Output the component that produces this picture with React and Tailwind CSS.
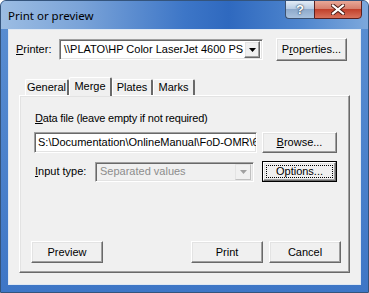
import React from 'react';

const ui = { fontFamily: '"Liberation Sans", Arial, sans-serif' };

// classic 3D edges
const raised =
  'bg-[#f0f0f0] border border-t-white border-l-white border-r-[#696969] border-b-[#696969] shadow-[inset_-1px_-1px_0_#a0a0a0,inset_1px_1px_0_#e3e3e3]';
const sunken =
  'border border-t-[#a0a0a0] border-l-[#a0a0a0] border-r-white border-b-white shadow-[inset_1px_1px_0_#696969,inset_-1px_-1px_0_#e3e3e3]';

function Arrow({ color = '#000' }) {
  return (
    <svg width="7" height="4" viewBox="0 0 7 4">
      <path d="M0 0h7L3.5 4z" fill={color} />
    </svg>
  );
}

function Button({ children, className = '' }) {
  return (
    <div className={`${raised} flex items-center justify-center text-[11px] text-black ${className}`}>
      {children}
    </div>
  );
}

function Tab({ label, active }) {
  return (
    <div
      className={`flex items-center justify-center text-[11px] text-black bg-[#f0f0f0] rounded-t-[2px] border-t border-l border-t-white border-l-white border-r-[2px] border-r-[#696969] ${
        active ? 'h-[19px] -mb-px pb-[2px]' : 'h-[16px]'
      }`}
      style={{ width: label.w }}
    >
      {label.name}
    </div>
  );
}

const tabs = [
  { name: 'General', w: 44 },
  { name: 'Merge', w: 43 },
  { name: 'Plates', w: 41 },
  { name: 'Marks', w: 42 },
];

export default function App() {
  return (
    <div
      className="w-[369px] h-[293px] flex flex-col rounded-t-[6px] border border-[#34547c] bg-[linear-gradient(180deg,#5b8fd2,#3e76c6)] overflow-hidden"
      style={ui}
    >
      {/* Title bar */}
      <div className="h-[28px] flex items-start bg-[linear-gradient(90deg,#9cbde3_0%,#7aa3d8_22%,#3d76c7_50%,#2f69bf_62%,#4f86ce_82%,#7da8dc_100%)] shrink-0">
        <div
          className="pl-[7px] pt-[6px] text-[11.5px] text-black"
          style={{ fontFamily: '"Noto Sans", "Open Sans", sans-serif' }}
        >
          Print or preview
        </div>
        <div className="ml-auto mr-[6px] flex h-[19px] -mt-px">
          <div className="w-[29px] h-full rounded-bl-[4px] border border-[#3c5170] border-r-0 bg-[linear-gradient(180deg,#e3ecf6_0%,#b9cde4_45%,#8eaacb_50%,#a9c2de_100%)] flex items-center justify-center">
            <span
              className="text-white font-bold text-[13px] leading-none"
              style={{ textShadow: '0 0 2px #1f3550, 0 0 1px #1f3550' }}
            >
              ?
            </span>
          </div>
          <div className="w-[48px] h-full rounded-br-[4px] border border-[#5a2020] bg-[linear-gradient(180deg,#e9a898_0%,#d7806e_45%,#c2412c_50%,#d8725c_100%)] flex items-center justify-center">
            <svg width="14" height="11" viewBox="0 0 14 11">
              <path d="M2 1.5L12 9.5M12 1.5L2 9.5" stroke="#4a1a14" strokeWidth="4" strokeLinecap="square" />
              <path d="M2 1.5L12 9.5M12 1.5L2 9.5" stroke="#fff" strokeWidth="2.2" strokeLinecap="square" />
            </svg>
          </div>
        </div>
      </div>

      {/* Body between side frames */}
      <div className="flex flex-1">
        <div className="w-[7px] shrink-0" />
        <div className="w-[353px] h-[256px] bg-[#f0f0f0] border border-[#dfe8f3] flex flex-col">
          {/* Printer row */}
          <div className="flex items-center mt-[8px] pl-[7px] h-[23px]">
            <div className="w-[43px] text-[11px] text-black first-letter:underline">Printer:</div>
            <div className={`${sunken} bg-white w-[204px] h-[21px] flex items-center p-[2px]`}>
              <div className="flex-1 pl-[2px] text-[11px] text-black whitespace-nowrap overflow-hidden">
                {'\\\\PLATO\\HP Color LaserJet 4600 PS'}
              </div>
              <div className={`${raised} w-[16px] h-[17px] flex items-center justify-center`}>
                <Arrow />
              </div>
            </div>
            <Button className="ml-[13px] w-[71px] h-[23px]">
              P<span className="underline">r</span>operties...
            </Button>
          </div>

          {/* Tabs + panel */}
          <div className="ml-[10px] mt-[16px] w-[331px] flex flex-col">
            <div className="relative z-10 flex items-end h-[18px] pl-[6px]">
              {tabs.map((t) => (
                <Tab key={t.name} label={t} active={t.name === 'Merge'} />
              ))}
            </div>
            <div className="h-[178px] bg-[#f0f0f0] border border-t-white border-l-white border-r-[#696969] border-b-[#696969] shadow-[inset_-1px_-1px_0_#a0a0a0,inset_1px_1px_0_#e3e3e3] flex flex-col pt-[16px] pb-[9px]">
              <div className="ml-[15px] text-[11px] leading-[13px] tracking-[-0.2px] text-black first-letter:underline">
                Data file (leave empty if not required)
              </div>
              <div className="flex items-center mt-[7px] ml-[14px]">
                <div className={`${sunken} bg-white w-[223px] h-[21px] flex items-center pl-[3px] overflow-hidden`}>
                  <span className="text-[11px] text-black whitespace-nowrap">
                    {'S:\\Documentation\\OnlineManual\\FoD-OMR\\6'}
                  </span>
                </div>
                <Button className="ml-[5px] w-[75px] h-[21px]">
                  <span className="first-letter:underline">Browse...</span>
                </Button>
              </div>
              <div className="flex items-center mt-[8px] ml-[14px] h-[21px]">
                <div className="w-[61px] pl-px text-[11px] text-black first-letter:underline">Input type:</div>
                <div className={`${sunken} bg-[#f0f0f0] w-[159px] h-[20px] flex items-center p-[2px]`}>
                  <div className="flex-1 pl-[2px] text-[11px] text-[#8d8d8d] whitespace-nowrap">
                    Separated values
                  </div>
                  <div className="w-[16px] h-[16px] flex items-center justify-center bg-[#f0f0f0] border border-t-[#e3e3e3] border-l-[#e3e3e3] border-r-[#c0c0c0] border-b-[#c0c0c0]">
                    <Arrow color="#a0a0a0" />
                  </div>
                </div>
                <div className="ml-[8px] w-[75px] h-[21px] border border-black">
                  <div className={`${raised} w-full h-full flex items-center justify-center p-[2px]`}>
                    <div className="w-full h-full border border-dotted border-black flex items-center justify-center text-[11px] text-black first-letter:underline">
                      Options...
                    </div>
                  </div>
                </div>
              </div>
              <div className="mt-auto flex items-center ml-[11px]">
                <Button className="w-[72px] h-[22px]">Preview</Button>
                <Button className="ml-[88px] w-[72px] h-[22px]">Print</Button>
                <Button className="ml-[6px] w-[72px] h-[22px]">Cancel</Button>
              </div>
            </div>
          </div>
        </div>
        <div className="w-[7px] shrink-0" />
      </div>
      <div className="h-[7px] shrink-0" />
    </div>
  );
}
